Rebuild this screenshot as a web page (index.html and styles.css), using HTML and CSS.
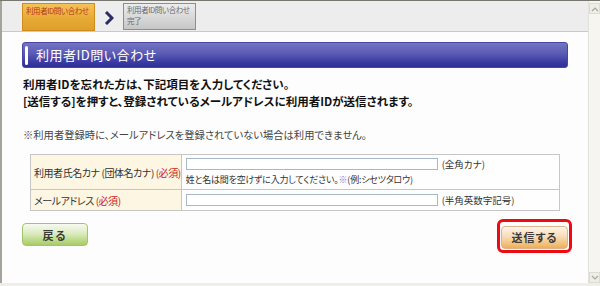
FILE: index.html
```html
<!DOCTYPE html>
<html lang="ja">
<head>
<meta charset="utf-8">
<title>利用者ID問い合わせ</title>
<link rel="stylesheet" href="styles.css">
</head>
<body>
<div class="window">
  <div class="page">
    <div class="steps">
      <div class="step step-current">利用者ID問い合わせ</div>
      <svg class="step-arrow" width="10" height="14" viewBox="0 0 10 14"><polyline points="2,1 8,7 2,13" fill="none" stroke="#2b2b66" stroke-width="3"/></svg>
      <div class="step step-next"><span class="step-line">利用者ID問い合わせ</span><span class="step-line">完了</span></div>
    </div>
    <div class="content">
      <h1 class="title"><span class="title-bar"></span>利用者ID問い合わせ</h1>
      <p class="lead">利用者IDを忘れた方は、下記項目を入力してください。<br>[送信する]を押すと、登録されているメールアドレスに利用者IDが送信されます。</p>
      <p class="note">※利用者登録時に、メールアドレスを登録されていない場合は利用できません。</p>
      <table class="form">
        <tr class="row-tall">
          <th>利用者氏名カナ (団体名カナ) <span class="req">(必須)</span></th>
          <td>
            <div class="field"><span class="input"></span><span class="hint">(全角カナ)</span></div>
            <div class="sub">姓と名は間を空けずに入力してください。<span class="mark">※</span>(例:シセツタロウ)</div>
          </td>
        </tr>
        <tr class="row-short">
          <th>メールアドレス <span class="req">(必須)</span></th>
          <td>
            <div class="field"><span class="input"></span><span class="hint">(半角英数字記号)</span></div>
          </td>
        </tr>
      </table>
      <div class="actions">
        <button class="btn btn-back">戻る</button>
        <div class="send-wrap">
          <button class="btn btn-send">送信する</button>
          <span class="highlight"></span>
        </div>
      </div>
    </div>
  </div>
  <div class="scrollbar">
    <span class="sb-btn sb-up"><svg width="8" height="6" viewBox="0 0 8 6"><polyline points="1,5 4,2 7,5" fill="none" stroke="#a8a8a0" stroke-width="1.2"/></svg></span>
    <span class="sb-track"></span>
    <span class="sb-btn sb-down"><svg width="8" height="6" viewBox="0 0 8 6"><polyline points="1,1 4,4 7,1" fill="none" stroke="#a8a8a0" stroke-width="1.2"/></svg></span>
  </div>
</div>
</body>
</html>
```

FILE: styles.css
```css
html, body {
  margin: 0;
  padding: 0;
}
body {
  width: 600px;
  height: 286px;
  overflow: hidden;
  background: #efeee8;
  font-family: "Noto Sans CJK JP", "Noto Sans", sans-serif;
  font-feature-settings: "palt";
  color: #222;
}
.window {
  display: flex;
  height: 283px;
  border-top: 1px solid #77776f;
  box-sizing: border-box;
}
.page {
  flex: 1;
  background: #fdfdfd;
  border-left: 2px solid #a4a49c;
  display: flex;
  flex-direction: column;
}
.steps {
  height: 31px;
  box-sizing: border-box;
  background: #ededed;
  border-bottom: 1px solid #c9c9c9;
  display: flex;
  align-items: flex-start;
  padding: 2px 0 0 20px;
}
.step {
  width: 73px;
  height: 28px;
  box-sizing: border-box;
  font-size: 7.5px;
  line-height: 9px;
  padding: 2px 0 0 3px;
  letter-spacing: -0.4px;
  white-space: nowrap;
  overflow: hidden;
}
.step-current {
  border: 1px solid #cf8c1c;
  background: linear-gradient(#f4c25a, #e7aa36 55%, #dea02a);
  color: #b8341a;
}
.step-next {
  border: 1px solid #8e8e8e;
  background: linear-gradient(#ececec, #d6d6d6 60%, #c6c6c6);
  color: #6a6a6a;
  height: 27px;
  display: flex;
  flex-direction: column;
  padding-top: 0;
}
.step-line {
  display: block;
  height: 11px;
  line-height: 11px;
}
.step-arrow {
  margin: 8px 9px 0 9px;
}
.content {
  padding: 10px 20px 0 20px;
  display: flex;
  flex-direction: column;
}
.title {
  margin: 0;
  height: 26px;
  box-sizing: border-box;
  border: 1px solid #4646a6;
  border-radius: 3px;
  background: linear-gradient(#7474c2, #5a5ab4 45%, #3a3aa2 80%, #2f2f98);
  color: #fff;
  font-size: 13px;
  font-weight: normal;
  line-height: 24px;
  display: flex;
  align-items: center;
  letter-spacing: 0.5px;
}
.title-bar {
  width: 3px;
  height: 19px;
  background: #fff;
  border-radius: 2px;
  margin: 0 8px 0 2px;
}
.lead {
  margin: 8px 0 0 1px;
  font-size: 11.5px;
  font-weight: bold;
  line-height: 17px;
  color: #111;
}
.note {
  margin: 16px 0 0 1px;
  font-size: 10.3px;
  line-height: 17px;
  color: #444;
}
.form {
  margin: 11px 8px 0 8px;
  border-collapse: collapse;
  border: 1px solid #c6c6c6;
  font-size: 10px;
  color: #333;
}
.form th {
  width: 143px;
  background: #fcf6e2;
  border: 1px solid #c6c6c6;
  text-align: left;
  font-weight: normal;
  padding: 0 0 0 3px;
  white-space: nowrap;
  letter-spacing: -0.45px;
}
.form td {
  border: 1px solid #c6c6c6;
  padding: 0 0 0 4px;
  background: #fefefe;
}
.row-tall th, .row-tall td {
  height: 34px;
}
.row-short th, .row-short td {
  height: 20px;
}
.req {
  color: #c8201e;
}
.field {
  display: flex;
  align-items: center;
}
.input {
  display: block;
  width: 250px;
  height: 10px;
  border: 1px solid #a9b8c8;
  background: #fff;
}
.hint {
  margin-left: 4px;
  line-height: 14px;
  font-size: 9.5px;
}
.sub {
  margin-top: 2px;
  line-height: 14px;
  font-size: 9px;
  letter-spacing: -0.2px;
}
.mark {
  color: #7777cc;
}
.actions {
  display: flex;
  justify-content: space-between;
  margin-top: 12px;
}
.btn {
  font-family: inherit;
  font-feature-settings: "palt";
  font-size: 11px;
  font-weight: bold;
  color: #3a3a3a;
  height: 23px;
  border-radius: 4px;
  padding: 0;
  letter-spacing: 2px;
}
.btn-back {
  width: 66px;
  border: 1px solid #a3c46f;
  background: linear-gradient(#f7faf0, #dcebc0 45%, #bad883 80%, #a9cb6a);
}
.send-wrap {
  position: relative;
}
.btn-send {
  width: 67px;
  border: 1px solid #dcb48a;
  background: linear-gradient(#fdf4ea, #f9dcb8 45%, #f2bd72 85%, #ecae58);
  letter-spacing: 1px;
}
.highlight {
  position: absolute;
  left: -4px;
  top: -4px;
  right: -4px;
  bottom: -4px;
  border: 3px solid #ee0a12;
  border-radius: 6px;
  pointer-events: none;
}
.scrollbar {
  width: 12px;
  background: #f6f5ef;
  border-left: 1px solid #e2e1da;
  display: flex;
  flex-direction: column;
  align-items: center;
  padding: 2px 0 0 0;
  box-sizing: border-box;
}
.sb-btn {
  width: 9px;
  height: 9px;
  display: flex;
  align-items: center;
  justify-content: center;
  background: #eeede6;
  border: 1px solid #dddcd4;
}
.sb-track {
  flex: 1;
}
```
